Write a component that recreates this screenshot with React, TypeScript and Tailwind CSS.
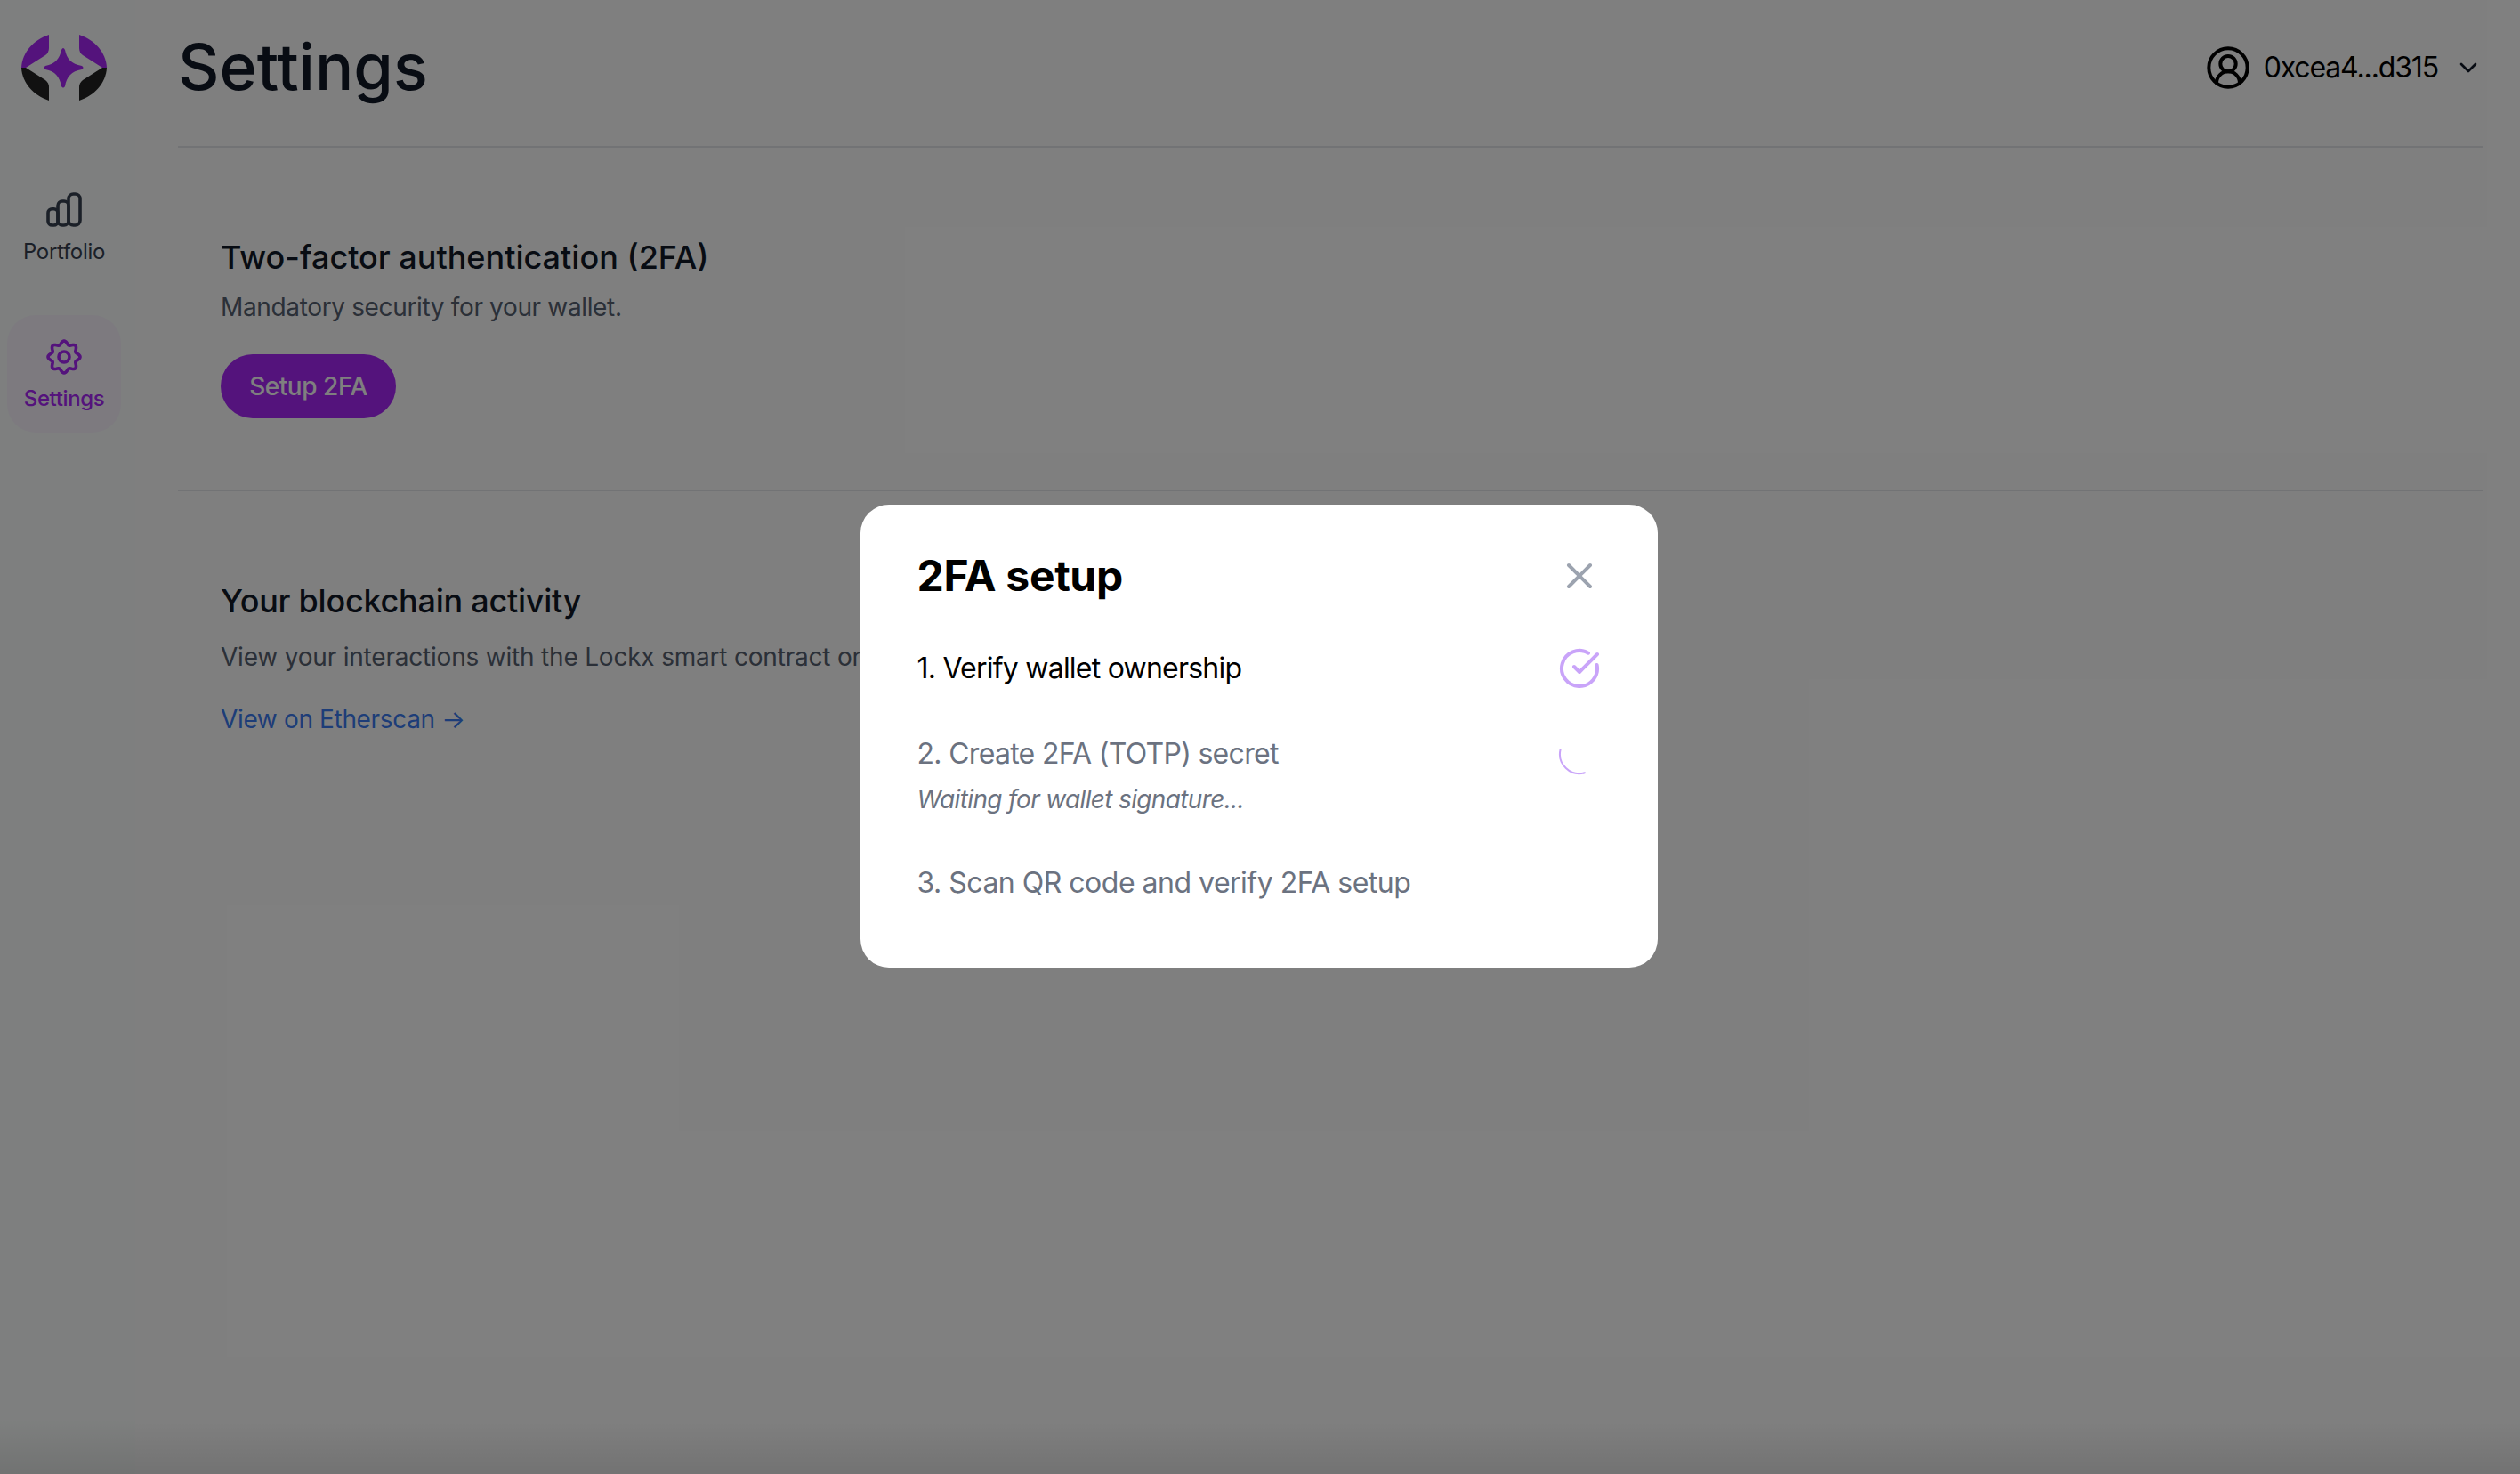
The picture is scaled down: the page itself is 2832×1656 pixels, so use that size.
import { ChevronDown, CircleCheckBig, CircleUserRound, X } from "lucide-react";

const Logo = () => (
  <svg width="96" height="76" viewBox="24 38 96 76" aria-label="Lockx">
    <path d="M55 39C38 45 25 58 24 76H29L51 62Q55 59 55 54Z" fill="#a826f8" />
    <path d="M89 39C106 45 119 58 120 76H115L93 62Q89 59 89 54Z" fill="#a826f8" />
    <path d="M55 113C38 107 25 94 24 76H29L51 90Q55 93 55 98Z" fill="#222222" />
    <path d="M89 113C106 107 119 94 120 76H115L93 90Q89 93 89 98Z" fill="#222222" />
    <path d="M69 56Q71 52 73 56C75 66 80 72 92 74Q95 76 92 78C80 80 75 86 73 97Q71 100 69 97C67 86 62 80 51 78Q48 76 51 74C62 72 67 66 69 56Z" fill="#a826f8" />
  </svg>
);

const BarsIcon = () => (
  <svg width="48" height="48" viewBox="0 0 48 48" fill="none" stroke="#374151" strokeWidth="3.6">
    <rect x="6" y="22.7" width="11" height="18.3" rx="4.5" />
    <rect x="17" y="14" width="12" height="27" rx="5" />
    <rect x="29" y="6" width="13" height="35" rx="5.5" />
  </svg>
);

const gearPoints = Array.from({ length: 120 }, (_, i) => {
  const a = (i / 120) * Math.PI * 2;
  const r = 16 + 2 * Math.cos(8 * a);
  return `${(24 + r * Math.sin(a)).toFixed(2)},${(24 - r * Math.cos(a)).toFixed(2)}`;
}).join(" ");

const GearIcon = () => (
  <svg width="48" height="48" viewBox="0 0 48 48" fill="none" stroke="currentColor" strokeWidth="3.6">
    <polygon points={gearPoints} strokeLinejoin="round" />
    <circle cx="24" cy="24" r="6" />
  </svg>
);

export default function App() {
  return (
    <div className="relative flex h-screen overflow-hidden bg-white font-['Inter',sans-serif] text-[#111827]">
      <aside className="flex w-[152px] shrink-0 flex-col items-start bg-[#fcfffe] pl-[8px] pt-[38px]">
        <div className="ml-[16px]">
          <Logo />
        </div>
        <nav className="mt-[88px] flex w-[128px] flex-col items-center gap-[44px]">
          <div className="flex h-[108px] w-full flex-col items-center justify-center">
            <BarsIcon />
            <span className="mt-[5px] text-[24px] leading-[36px] tracking-[-0.3px] text-[#374151]">Portfolio</span>
          </div>
          <div className="flex h-[132px] w-full flex-col items-center justify-center rounded-[32px] bg-[#faf5ff] pt-[3px] text-[#a826f8]">
            <GearIcon />
            <span className="mt-[5px] text-[24px] font-medium leading-[36px] tracking-[-0.4px]">Settings</span>
          </div>
        </nav>
      </aside>

      <main className="min-w-0 flex-1 pl-[48px] pr-[42px]">
        <header className="flex h-[166px] items-center justify-between border-b-2 border-[#e5e7eb] pb-[15px]">
          <h1 className="text-[72px] font-medium leading-[90px]">Settings</h1>
          <div className="mt-[3px] flex items-center text-[32px] tracking-[-1.15px] text-black">
            <CircleUserRound size={52} strokeWidth={1.85} className="mr-[14px]" />
            <span>0xcea4...d315</span>
            <ChevronDown size={32} strokeWidth={2} className="ml-[18px] text-[#111827]" />
          </div>
        </header>

        <section className="h-[386px] border-b-2 border-[#e5e7eb] pl-[48px] pt-[98px]">
          <h2 className="text-[36px] font-medium leading-[50px]">Two-factor authentication (2FA)</h2>
          <p className="mt-[11px] text-[28px] leading-[40px] tracking-[-0.35px] text-[#566070]">Mandatory security for your wallet.</p>
          <button className="mt-[33px] flex h-[72px] w-[197px] items-center justify-center rounded-full bg-[#a826f8] text-[28px] font-medium tracking-[-0.45px] text-white">Setup 2FA</button>
        </section>

        <section className="pl-[48px] pt-[98px]">
          <h2 className="text-[36px] font-medium leading-[50px] tracking-[-0.25px]">Your blockchain activity</h2>
          <p className="mt-[18px] whitespace-nowrap text-[28px] leading-[40px] tracking-[-0.2px] text-[#566070]">View your interactions with the Lockx smart contract on Etherscan.</p>
          <a className="mt-[30px] block text-[28px] leading-[40px] tracking-[-0.35px] text-[#3b7af0]">View on Etherscan →</a>
        </section>
      </main>

      <div className="absolute inset-x-0 bottom-0 h-[60px] bg-gradient-to-b from-transparent to-black/10" />

      <div className="absolute inset-0 flex items-center justify-center bg-black/50 pb-[3px] pr-[3px]">
        <div className="h-[520px] w-[896px] rounded-[32px] bg-white px-[64px] pt-[49px]">
          <div className="flex h-[62px] items-center justify-between">
            <h3 className="text-[48px] font-bold leading-[62px] tracking-[-0.35px] text-black">2FA setup</h3>
            <X size={48} strokeWidth={2} className="text-[#9ca3af]" />
          </div>
          <div className="mt-[49px] flex h-[48px] items-center justify-between">
            <span className="text-[32px] tracking-[-0.77px] text-black">1. Verify wallet ownership</span>
            <CircleCheckBig size={48} strokeWidth={2} className="text-[#c9a4f9]" />
          </div>
          <div className="mt-[48px] flex items-start justify-between">
            <div>
              <div className="text-[32px] leading-[48px] tracking-[-0.7px] text-[#6b7280]">2. Create 2FA (TOTP) secret</div>
              <div className="mt-[7px] text-[28px] italic leading-[40px] tracking-[-0.65px] text-[#6b7280]">Waiting for wallet signature...</div>
            </div>
            <svg width="48" height="48" viewBox="0 0 48 48" fill="none" stroke="#c9a4f9" strokeWidth="2" strokeLinecap="round">
              <path d="M2.6 19A22 22 0 0 0 30 45.2" />
            </svg>
          </div>
          <div className="mt-[50px] text-[32px] leading-[48px] tracking-[-0.5px] text-[#6b7280]">3. Scan QR code and verify 2FA setup</div>
        </div>
      </div>
    </div>
  );
}
